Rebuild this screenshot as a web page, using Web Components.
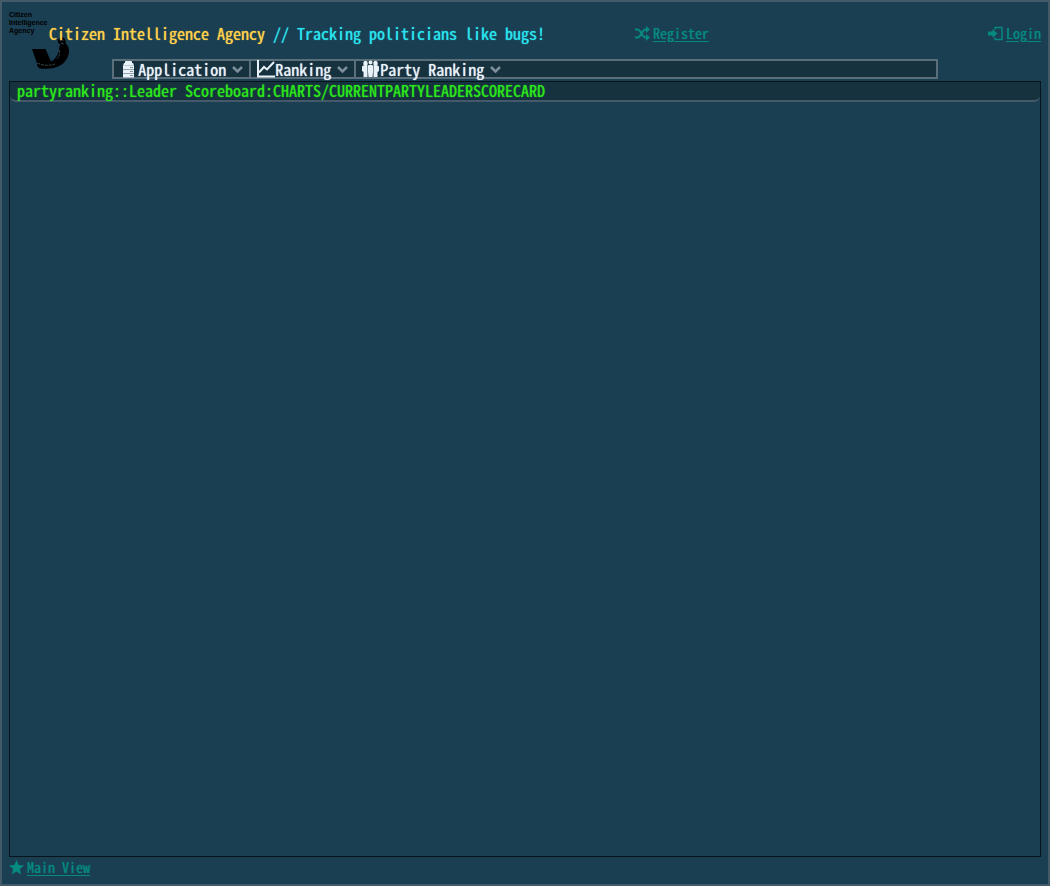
<!DOCTYPE html>
<html lang="en">
<head>
<meta charset="utf-8">
<title>Citizen Intelligence Agency</title>
<style>
  html { --line: #455a69; --menu-line: #5b6f7b; --bar: #16323f; --link: #068a80; background: #1a3e52; }
  body { margin: 0; background: #1a3e52; color: #e8f2f8; font: 400 16px/20px "Noto Sans Mono CJK SC", "DejaVu Sans Mono", monospace; text-shadow: 0 0 1px currentColor; }
</style>
</head>
<body>
<cia-page>
  <cia-header slot="header">
    <cia-link slot="register" icon="shuffle" href="#register">Register</cia-link>
    <cia-link slot="login" icon="login" href="#login">Login</cia-link>
  </cia-header>
  <cia-menu slot="menu">
    <cia-menu-item icon="server">Application</cia-menu-item>
    <cia-menu-item icon="chart">Ranking</cia-menu-item>
    <cia-menu-item icon="group">Party Ranking</cia-menu-item>
  </cia-menu>
  <cia-panel>partyranking::Leader Scoreboard:CHARTS/CURRENTPARTYLEADERSCORECARD</cia-panel>
  <cia-link slot="footer" icon="star" href="#main">Main View</cia-link>
</cia-page>
<script>
const define = (name, html) => customElements.define(name, class extends HTMLElement {
  constructor() {
    super();
    this.attachShadow({ mode: 'open' }).innerHTML = html;
  }
  connectedCallback() {
    const holder = this.shadowRoot.querySelector('[data-icon]');
    if (holder) holder.innerHTML = icons[this.getAttribute('icon')];
    const anchor = this.shadowRoot.querySelector('a');
    if (anchor) anchor.href = this.getAttribute('href');
  }
});

const icons = {
  shuffle: '<svg width="15" height="15" viewBox="0 0 15 15" aria-hidden="true"><g fill="none" stroke="currentColor" stroke-width="2"><path d="M0 3.5h2.5c3.5 0 4.500 8 8 8H12M0 11.500h2.500c3.500 0 4.500-8 8-8H12"/></g><path fill="currentColor" d="M11 0l4 3.500-4 3.500zM11 8l4 3.500-4 3.500z"/></svg>',
  login: '<svg width="15" height="15" viewBox="0 0 15 15" aria-hidden="true"><path fill="currentColor" d="M0 5.500h4.500V3l5 4.500-5 4.500V9.500H0z"/><path d="M7 3.500v-2h7v12H7v-2" fill="none" stroke="currentColor" stroke-width="1.500"/></svg>',
  star: '<svg width="15" height="15" viewBox="0 0 15 15" aria-hidden="true"><path fill="currentColor" d="M7.500 0l2.200 5 5.300.4-4.100 3.500 1.300 5.600-4.700-2.900-4.700 2.900 1.300-5.600L0 5.400l5.300-.4z"/></svg>',
  server: '<svg width="18" height="18" viewBox="0 0 18 18" aria-hidden="true"><path fill="currentColor" d="M5 1.500Q5 1 6 1h5q1 0 1 .5V3h1l1 2.500H3L4 3h1zM3 6h11v3H3zM3 10h11v3H3zM3 14h11v3.500H3z"/><path fill="currentColor" opacity=".6" d="M3 5h11v12H3z"/><path stroke="#16323f" stroke-width=".5" d="M10 7.500h3M10 11.500h3M10 15.500h3"/></svg>',
  chart: '<svg width="18" height="18" viewBox="0 0 18 18" aria-hidden="true"><path d="M1 0v16.500h17" fill="none" stroke="currentColor" stroke-width="2"/><path d="M2 12.500l5-5.500 3 2.500 7-7.500" fill="none" stroke="currentColor" stroke-width="2"/></svg>',
  group: '<svg width="18" height="18" viewBox="0 0 18 18" aria-hidden="true"><g fill="currentColor"><ellipse cx="3.500" cy="3.500" rx="2.200" ry="2.700"/><ellipse cx="13.500" cy="3.500" rx="2.200" ry="2.700"/><circle cx="8.500" cy="2.500" r="2"/><path d="M0 7q0-1.500 1.500-1.500h4V17H1.500v-5L0 11zM17 7q0-1.500-1.500-1.500h-4V17h4v-5l1.500-1zM6 6q0-1 1-1h3q1 0 1 1v6l-.5 5h-4L6 12z"/></g></svg>'
};

define('cia-page', `
<style>
  :host { display: flex; flex-direction: column; box-sizing: border-box; min-height: 100vh; border: 2px solid var(--line); padding: 7px; }
  main { flex: 1; display: flex; flex-direction: column; margin-top: 2px; }
  footer { height: 20px; display: flex; }
</style>
<slot name="header"></slot><slot name="menu"></slot>
<main><slot></slot></main>
<footer><slot name="footer"></slot></footer>`);

define('cia-header', `
<style>
  :host { display: grid; grid-template-columns: 40px 586fr 406fr; align-items: center; height: 48px; padding-bottom: 2px; }
  .logo { align-self: start; width: 40px; height: 48px; text-shadow: none; }
  .logo svg { display: block; overflow: visible; }
  h1 { margin: 0; font: inherit; color: #ffd24a; white-space: nowrap; }
  span { color: #29e4ee; }
  nav { display: flex; justify-content: space-between; }
</style>
<div class="logo"><svg width="62" height="62" viewBox="0 0 62 62" role="img" aria-label="Agency logo">
  <g font-family="Liberation Sans, sans-serif" font-size="7" font-weight="700" fill="#000"><text x="0" y="8">Citizen</text><text x="0" y="16">Intelligence</text><text x="0" y="24">Agency</text></g>
  <path d="M23 40h13.500l5.500 12.500q6-3 8-11 0-4 1.500-6-4-2-2-5.500 3-3 6-.5 1.500 2 1 4.500 4 4 3.500 10-2 8-8 12-9 5-21 3.500-3-1-3-5z"/>
  <path d="M28 54q10 4 18 1M50 41q2 4-2 9M51 32q2-2 4 0M52 34l3 1" fill="none" stroke="#52636d" stroke-width=".7" stroke-dasharray="3 1"/>
</svg></div>
<h1>Citizen Intelligence Agency <span>// Tracking politicians like bugs!</span></h1>
<nav aria-label="Account"><slot name="register"></slot><slot name="login"></slot></nav>`);

define('cia-link', `
<style>
  :host { display: block; }
  a { display: flex; align-items: center; gap: 3px; color: var(--link); font-size: 14px; text-decoration: none; }
  i { display: flex; }
  span { text-decoration: underline; text-underline-offset: 2px; }
</style>
<a href="#"><i data-icon></i><span><slot></slot></span></a>`);

define('cia-menu', `
<style>
  :host { display: flex; box-sizing: border-box; width: 80%; height: 20px; margin: 0 auto; border: 2px solid var(--menu-line); background: var(--bar); }
</style>
<slot></slot>`);

define('cia-menu-item', `
<style>
  :host { display: block; border-right: 2px solid var(--menu-line); }
  :host(:last-child) { border-right: 0; }
  button { display: flex; align-items: center; height: 16px; padding: 0 6px; border: 0; background: none; color: inherit; font: inherit; text-shadow: inherit; white-space: nowrap; }
  i { display: flex; }
  .arrow { margin-left: 6px; color: #7c8f9b; }
</style>
<button type="button" aria-haspopup="true"><i data-icon></i><slot></slot><svg class="arrow" width="11" height="8" viewBox="0 0 11 8" aria-hidden="true"><path d="M1 2l4.500 4.500L10 2" fill="none" stroke="currentColor" stroke-width="2.500"/></svg></button>`);

define('cia-panel', `
<style>
  :host { flex: 1; display: block; border: 1px solid #07141b; }
  h2 { margin: 0; padding: 0 7px; height: 18px; line-height: 16px; font-size: 16px; font-weight: 400; color: #2be51c; background: var(--bar); border-bottom: 2px solid var(--line); border-radius: 0 0 6px 6px; white-space: nowrap; }
</style>
<h2><slot></slot></h2>`);
</script>
</body>
</html>
